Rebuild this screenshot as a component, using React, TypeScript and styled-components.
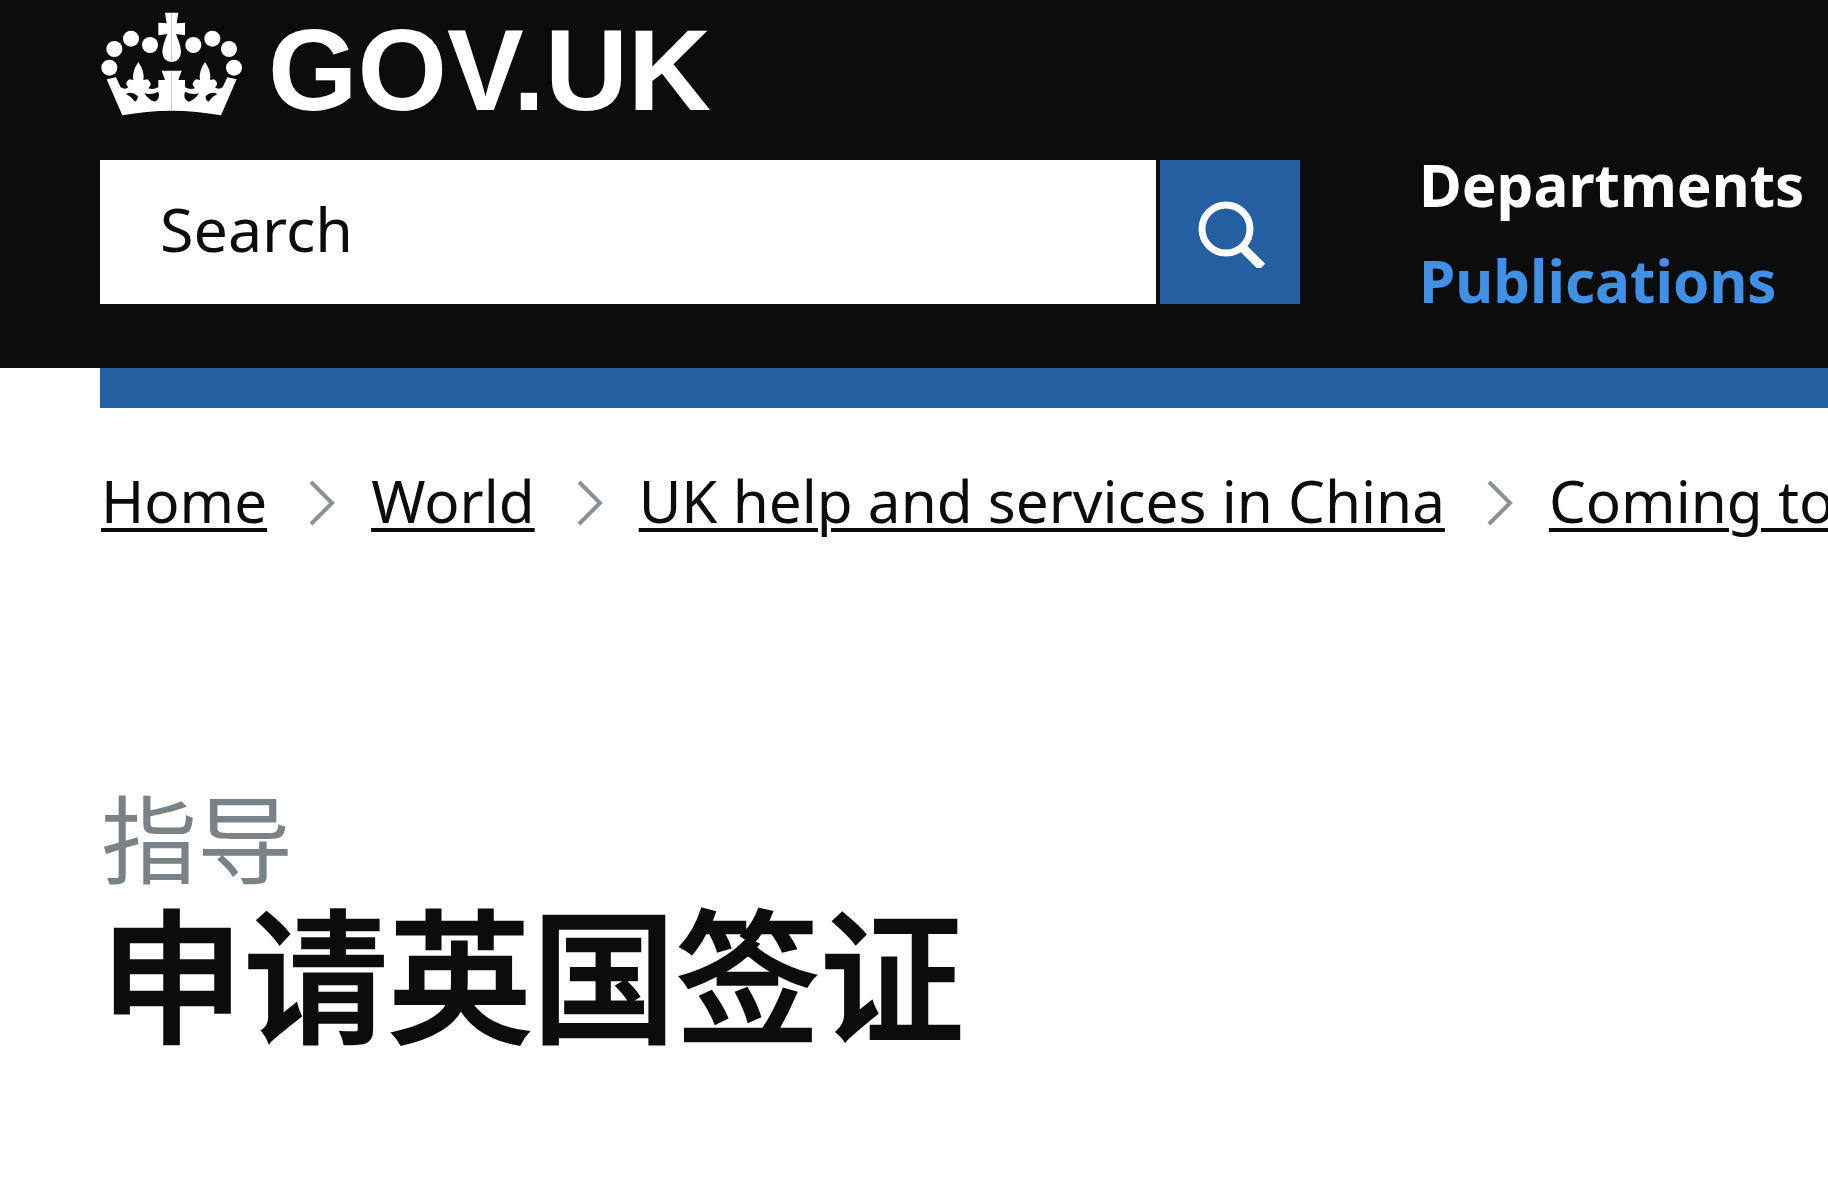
import styled, { createGlobalStyle } from 'styled-components';

const GlobalStyle = createGlobalStyle`
  html, body {
    margin: 0;
    padding: 0;
    background: #ffffff;
    overflow: hidden;
  }
  body {
    font-family: "Noto Sans", "Noto Sans CJK SC", sans-serif;
    color: #0c0c0c;
  }
`;

const Page = styled.div`
  width: 1828px;
  height: 1184px;
  overflow: hidden;
`;

const Header = styled.header`
  height: 368px;
  background: #0c0c0c;
  padding-left: 100px;
  box-sizing: border-box;
`;

const LogoRow = styled.a`
  display: flex;
  align-items: center;
  height: 160px;
  color: #ffffff;
  text-decoration: none;
`;

const Crown = styled.svg`
  display: block;
  width: 170px;
  height: 130px;
  margin: -30px 8px 0 -10px;
  flex: none;
`;

const Wordmark = styled.span`
  font-family: "Liberation Sans", Arial, sans-serif;
  font-weight: 700;
  font-size: 115px;
  line-height: 1;
  margin-top: -20px;
`;

const SearchRow = styled.div`
  display: flex;
  align-items: flex-start;
`;

const SearchField = styled.div`
  width: 1056px;
  height: 144px;
  background: #ffffff;
  display: flex;
  align-items: center;
  padding: 0 0 7px 60px;
  box-sizing: border-box;
  font-size: 61px;
  color: #0c0c0c;
`;

const SearchButton = styled.button`
  width: 140px;
  height: 144px;
  margin-left: 4px;
  padding: 4px 0 0 4px;
  border: 0;
  background: #245fa2;
  display: flex;
  align-items: center;
  justify-content: center;
`;

const Nav = styled.nav`
  display: flex;
  flex-direction: column;
  gap: 20px;
  margin-left: 119px;
  margin-top: -13px;
`;

const NavLink = styled.a<{ $active?: boolean }>`
  font-size: 58.4px;
  font-weight: 700;
  line-height: 76px;
  white-space: nowrap;
  color: ${(p) => (p.$active ? '#4090e6' : '#ffffff')};
`;

const BlueBar = styled.div`
  height: 40px;
  margin-left: 100px;
  background: #245fa2;
`;

const Breadcrumbs = styled.ol`
  display: flex;
  align-items: center;
  gap: 36px;
  list-style: none;
  margin: 58px 0 0;
  padding: 0 0 0 101px;
  font-size: 58.4px;
  line-height: 70px;
  white-space: nowrap;
`;

const Crumb = styled.li`
  display: flex;
  align-items: center;
  gap: 36px;
`;

const CrumbLink = styled.a`
  color: #0c0c0c;
  text-decoration: underline;
  text-decoration-thickness: 4px;
  text-underline-offset: 5px;
`;

const Chevron = styled.svg`
  display: block;
  width: 28px;
  height: 46px;
  margin: 4px 0 0 4px;
  flex: none;
`;

const Caption = styled.span`
  display: block;
  margin: 248px 0 0 101px;
  font-size: 96px;
  line-height: 110px;
  color: #7a8287;
`;

const Title = styled.h1`
  margin: -8px 0 0 100px;
  font-size: 144px;
  font-weight: 500;
  -webkit-text-stroke: 2.5px #0c0c0c;
  line-height: 180px;
  color: #0c0c0c;
`;

const crumbs = ['Home', 'World', 'UK help and services in China', 'Coming to the UK'];

const CrownHalf = () => (
  <>
    <path d="M245 332Q170 332 97 346L50 238L78 232L92 262Q105 270 115 262Q100 250 118 238L130 240Q125 215 145 186Q165 215 160 240L172 238Q190 250 175 265Q190 270 205 262L205 240L225 240L215 212L245 212Z" fill="#fff" />
    <path d="M108 282Q125 272 143 288Q145 298 135 305Q125 290 108 282ZM163 280Q185 285 205 275Q212 295 195 305Q175 300 163 280Z" fill="#0c0c0c" />
    <circle cx="73" cy="147" r="24" fill="#fff" />
    <circle cx="123" cy="116" r="24" fill="#fff" />
    <circle cx="180" cy="135" r="24" fill="#fff" />
    <circle cx="58" cy="203" r="24" fill="#fff" />
    <path d="M245 38L225 38L230 70L205 68L205 106L232 102Q218 135 217 155Q218 185 245 186Z" fill="#fff" />
  </>
);

export default function App() {
  return (
    <Page>
      <GlobalStyle />
      <Header>
        <LogoRow>
          <Crown viewBox="0 0 510 390" aria-hidden="true">
            <CrownHalf />
            <g transform="translate(490 0) scale(-1 1)">
              <CrownHalf />
            </g>
          </Crown>
          <Wordmark>GOV.UK</Wordmark>
        </LogoRow>
        <SearchRow>
          <SearchField>Search</SearchField>
          <SearchButton aria-label="Search">
            <svg width="68" height="68" viewBox="0 0 68 68" fill="none" stroke="#fff">
              <circle cx="28" cy="29" r="24" strokeWidth="7" />
              <path d="M44 47L64 67" strokeWidth="9" />
            </svg>
          </SearchButton>
          <Nav>
            <NavLink>Departments</NavLink>
            <NavLink $active>Publications</NavLink>
          </Nav>
        </SearchRow>
      </Header>
      <BlueBar />
      <Breadcrumbs>
        {crumbs.map((label, i) => (
          <Crumb key={label}>
            {i > 0 && (
              <Chevron viewBox="0 0 28 46" fill="none" stroke="#8a9094" strokeWidth="4">
                <path d="M4 2L25 23L4 44" />
              </Chevron>
            )}
            <CrumbLink>{label}</CrumbLink>
          </Crumb>
        ))}
      </Breadcrumbs>
      <Caption>指导</Caption>
      <Title>申请英国签证</Title>
    </Page>
  );
}
